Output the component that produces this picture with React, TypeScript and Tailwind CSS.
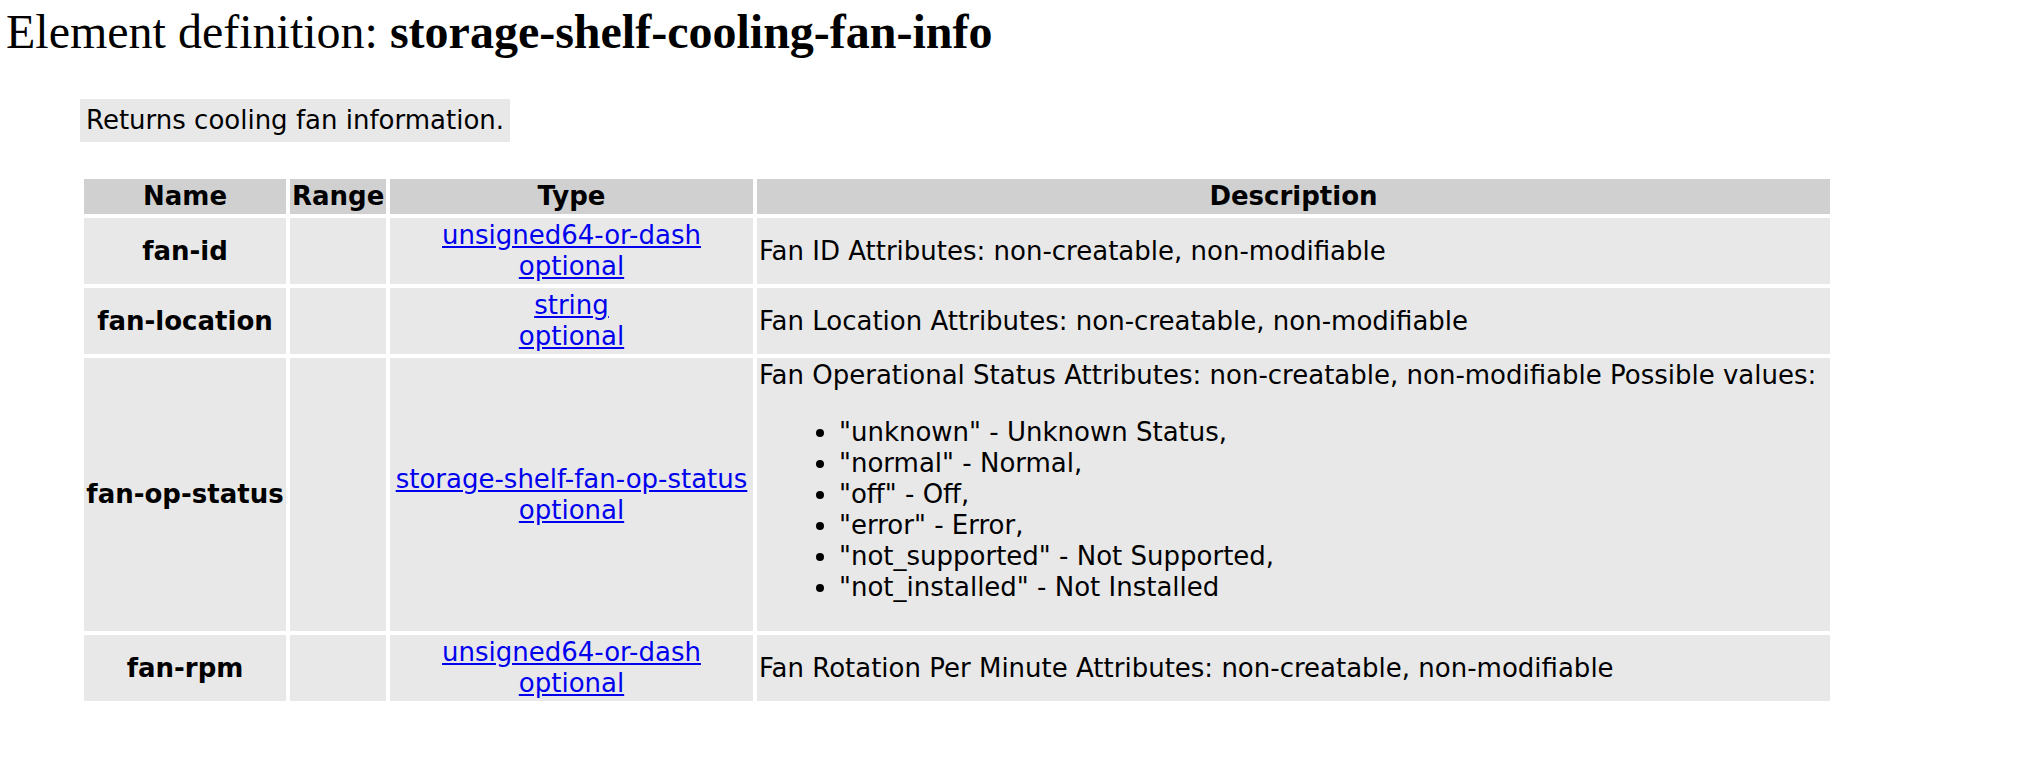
import React from "react"

type Row = {
  name: string
  type: string
  desc: string
  values?: string[]
}

const rows: Row[] = [
  { name: "fan-id", type: "unsigned64-or-dash", desc: "Fan ID Attributes: non-creatable, non-modifiable" },
  { name: "fan-location", type: "string", desc: "Fan Location Attributes: non-creatable, non-modifiable" },
  {
    name: "fan-op-status",
    type: "storage-shelf-fan-op-status",
    desc: "Fan Operational Status Attributes: non-creatable, non-modifiable Possible values:",
    values: [
      "\"unknown\" - Unknown Status,",
      "\"normal\" - Normal,",
      "\"off\" - Off,",
      "\"error\" - Error,",
      "\"not_supported\" - Not Supported,",
      "\"not_installed\" - Not Installed",
    ],
  },
  { name: "fan-rpm", type: "unsigned64-or-dash", desc: "Fan Rotation Per Minute Attributes: non-creatable, non-modifiable" },
]

export default function App() {
  return (
    <div className="min-h-screen bg-white text-black">
      {/* Title */}
      <h1 className="pl-[6px] pt-[4px] font-['Liberation_Serif',serif] text-[48px] leading-[55px] font-normal">
        Element definition: <span className="font-bold">storage-shelf-cooling-fan-info</span>
      </h1>

      <div className="font-['DejaVu_Sans',sans-serif] text-[26px] leading-[31px]">
        {/* Summary */}
        <div className="ml-[80px] mt-[40px]">
          <span className="inline-block bg-[#e8e8e8] p-[6px]">Returns cooling fan information.</span>
        </div>

        {/* Attribute table */}
        <table className="ml-[80px] mt-[33px] w-[1754px] table-fixed border-separate border-spacing-[4px]">
          <thead>
            <tr className="bg-[#d0d0d0]">
              <th className="w-[202px] p-[2px] text-center font-bold">Name</th>
              <th className="w-[96px] p-[2px] text-center font-bold">Range</th>
              <th className="w-[363px] p-[2px] text-center font-bold">Type</th>
              <th className="w-[1073px] p-[2px] text-center font-bold">Description</th>
            </tr>
          </thead>
          <tbody>
            {rows.map((r) => (
              <tr key={r.name}>
                <td className="bg-[#e8e8e8] p-[2px] text-center align-middle font-bold">{r.name}</td>
                <td className="bg-[#e8e8e8] p-[2px]"></td>
                <td className="bg-[#e8e8e8] p-[2px] text-center align-middle whitespace-nowrap">
                  <a href="#" className="text-[#0000ee] underline">{r.type}</a>
                  <br />
                  <a href="#" className="text-[#0000ee] underline">optional</a>
                </td>
                <td className="bg-[#e8e8e8] p-[2px] text-left align-middle">
                  <span className="whitespace-nowrap">{r.desc}</span>
                  {r.values && (
                    <ul className="my-[26px] list-disc pl-[80px]">
                      {r.values.map((v) => (
                        <li key={v}>{v}</li>
                      ))}
                    </ul>
                  )}
                </td>
              </tr>
            ))}
          </tbody>
        </table>
      </div>
    </div>
  )
}
